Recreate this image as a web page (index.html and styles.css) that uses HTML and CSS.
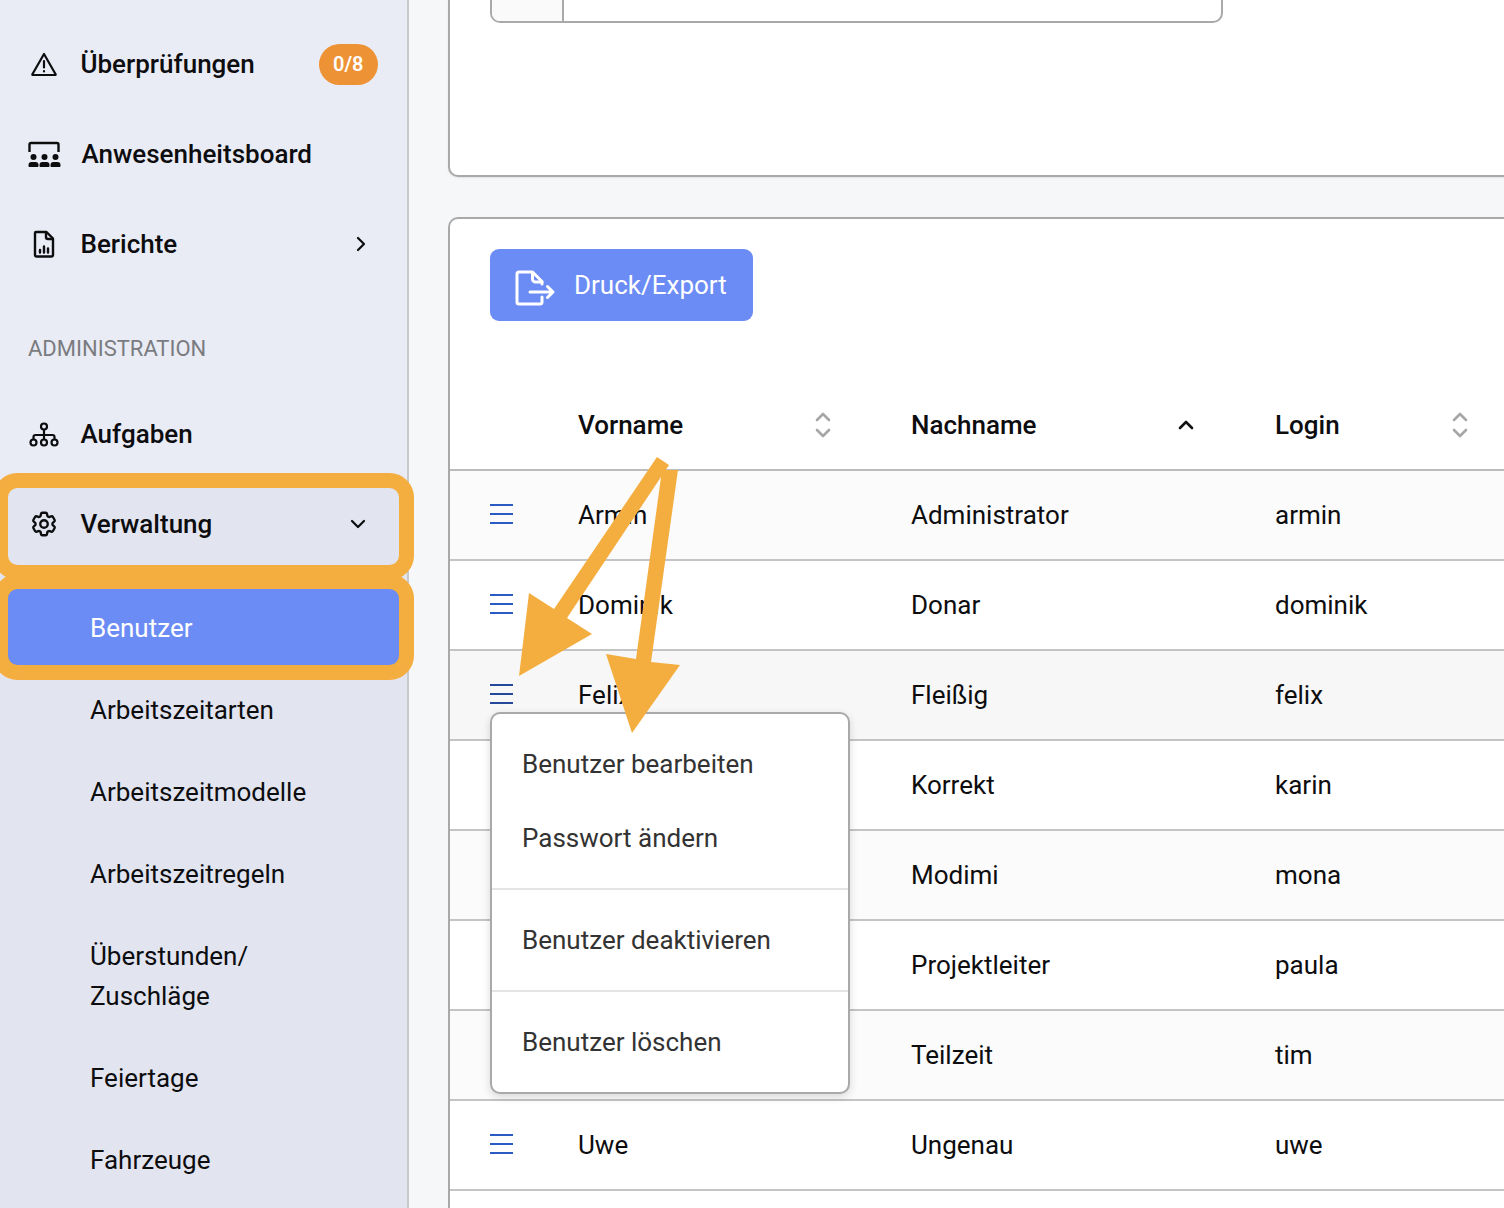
FILE: index.html
```html
<!DOCTYPE html>
<html lang="de">
<head>
  <meta charset="UTF-8">
  <meta name="viewport" content="width=device-width, initial-scale=1.0">
  <title>Benutzer</title>
  <link rel="stylesheet" href="styles.css">
</head>
<body>
  <!-- Sidebar -->
  <div class="sidebar">
    <ul class="nav">
      <li class="nav-item">
        <span class="nav-icon">
          <svg width="28" height="26" viewBox="0 0 28 26" fill="none" stroke="currentColor" stroke-width="2.2" stroke-linecap="round" stroke-linejoin="round"><path d="M14 3 2.4 23.2a.5.5 0 0 0 .4.8h22.4a.5.5 0 0 0 .4-.8Z"/><path d="M14 10v6.5M14 20.2v.2"/></svg>
        </span>
        <span class="nav-label">Überprüfungen</span>
        <span class="badge">0/8</span>
      </li>
      <li class="nav-item">
        <span class="nav-icon">
          <svg width="34" height="28" viewBox="0 0 34 28" fill="currentColor"><path d="M3 12V4.500a1.500 1.500 0 0 1 1.500-1.500h26a1.500 1.500 0 0 1 1.500 1.500V12" transform="translate(-0.500 0)" fill="none" stroke="currentColor" stroke-width="2.400"/><circle cx="6.500" cy="17" r="3"/><circle cx="17.500" cy="17" r="3"/><circle cx="28.500" cy="17" r="3"/><path d="M1.500 26v-1a3 3 0 0 1 3-3h4a3 3 0 0 1 3 3v1a1 1 0 0 1-1 1h-8a1 1 0 0 1-1-1ZM12.500 26v-1a3 3 0 0 1 3-3h4a3 3 0 0 1 3 3v1a1 1 0 0 1-1 1h-8a1 1 0 0 1-1-1ZM23.500 26v-1a3 3 0 0 1 3-3h4a3 3 0 0 1 3 3v1a1 1 0 0 1-1 1h-8a1 1 0 0 1-1-1Z"/></svg>
        </span>
        <span class="nav-label">Anwesenheitsboard</span>
      </li>
      <li class="nav-item">
        <span class="nav-icon">
          <svg width="22" height="28" viewBox="0 0 22 28" fill="none" stroke="currentColor" stroke-width="2.400" stroke-linecap="round" stroke-linejoin="round"><path d="M3 2h10.500L20 8.500V25a1.500 1.500 0 0 1-1.500 1.500h-15A1.500 1.500 0 0 1 2 25V3a1 1 0 0 1 1-1Z"/><path d="M13 2.500V7a2 2 0 0 0 2 2h4.500"/><path d="M7 22.500v-2.500M11 22.500v-6M15 22.500v-4"/></svg>
        </span>
        <span class="nav-label">Berichte</span>
        <svg class="nav-arrow" width="12" height="16" viewBox="0 0 12 16" fill="none" stroke="currentColor" stroke-width="2.200" stroke-linecap="round" stroke-linejoin="round"><path d="M3 2l6 6-6 6"/></svg>
      </li>
    </ul>

    <div class="nav-heading">ADMINISTRATION</div>

    <ul class="nav">
      <li class="nav-item">
        <span class="nav-icon">
          <svg width="30" height="25" viewBox="0 0 30 25" fill="none" stroke="currentColor" stroke-width="2.200"><circle cx="15" cy="4.500" r="3"/><circle cx="4.500" cy="20.500" r="3"/><circle cx="15" cy="20.500" r="3"/><circle cx="25.500" cy="20.500" r="3"/><path d="M15 7.500v10M4.500 17.500v-2.500a2 2 0 0 1 2-2h17a2 2 0 0 1 2 2v2.500"/></svg>
        </span>
        <span class="nav-label">Aufgaben</span>
      </li>
    </ul>

    <div class="nav-group">
      <div class="nav-item">
        <span class="nav-icon">
          <svg width="30" height="30" viewBox="0 0 24 24" fill="none" stroke="currentColor" stroke-width="1.900" stroke-linecap="round" stroke-linejoin="round"><path d="M9.594 3.940c.09-.542.56-.94 1.110-.94h2.593c.55 0 1.020.398 1.110.94l.213 1.281c.063.374.313.686.645.870.074.040.147.083.22.127.325.196.72.257 1.075.124l1.217-.456a1.125 1.125 0 0 1 1.370.49l1.296 2.247a1.125 1.125 0 0 1-.26 1.431l-1.003.827c-.293.241-.438.613-.43.992a7.723 7.723 0 0 1 0 .255c-.008.378.137.75.43.991l1.004.827c.424.35.534.955.26 1.430l-1.298 2.247a1.125 1.125 0 0 1-1.369.491l-1.217-.456c-.355-.133-.75-.072-1.076.124a6.470 6.470 0 0 1-.22.128c-.331.183-.581.495-.644.869l-.213 1.281c-.09.543-.56.94-1.110.94h-2.594c-.55 0-1.019-.398-1.110-.94l-.213-1.281c-.062-.374-.312-.686-.644-.87a6.520 6.520 0 0 1-.22-.127c-.325-.196-.72-.257-1.076-.124l-1.217.456a1.125 1.125 0 0 1-1.369-.49l-1.297-2.247a1.125 1.125 0 0 1 .26-1.431l1.004-.827c.292-.24.437-.613.43-.991a6.932 6.932 0 0 1 0-.255c.007-.38-.138-.751-.43-.992l-1.004-.827a1.125 1.125 0 0 1-.26-1.430l1.297-2.247a1.125 1.125 0 0 1 1.370-.491l1.216.456c.356.133.751.072 1.076-.124.072-.044.146-.086.22-.128.332-.183.582-.495.644-.869l.214-1.280Z"/><path d="M15 12a3 3 0 1 1-6 0 3 3 0 0 1 6 0Z"/></svg>
        </span>
        <span class="nav-label">Verwaltung</span>
        <svg class="nav-arrow nav-arrow-open" width="16" height="10" viewBox="0 0 16 10" fill="none" stroke="currentColor" stroke-width="2.200" stroke-linecap="round" stroke-linejoin="round"><path d="M2 2l6 6 6-6"/></svg>
      </div>
      <ul class="subnav">
        <li class="subnav-item active">Benutzer</li>
        <li class="subnav-item">Arbeitszeitarten</li>
        <li class="subnav-item">Arbeitszeitmodelle</li>
        <li class="subnav-item">Arbeitszeitregeln</li>
        <li class="subnav-item">Überstunden/<br>Zuschläge</li>
        <li class="subnav-item">Feiertage</li>
        <li class="subnav-item">Fahrzeuge</li>
      </ul>
    </div>
  </div>

  <!-- Main Content -->
  <div class="content">
    <div class="card card-top">
      <div class="filter-box">
        <div class="filter-cell"></div>
      </div>
    </div>

    <div class="card">
      <button class="btn-export" type="button">
        <svg class="btn-export-icon" width="40" height="36" viewBox="0 0 40 36" fill="none" stroke="currentColor" stroke-width="3" stroke-linecap="round" stroke-linejoin="round"><path d="M27 27V32a2 2 0 0 1-2 2H4a2 2 0 0 1-2-2V4a2 2 0 0 1 2-2h13.500L27 11.500V14"/><path d="M17.500 2.500V9a3 3 0 0 0 3 3H27"/><path d="M15 22h23M32.500 16.500 38 22l-5.500 5.500"/></svg>
        Druck/Export
      </button>

      <table class="user-table">
        <colgroup>
          <col class="col-menu">
          <col class="col-first">
          <col class="col-last">
          <col>
        </colgroup>
        <thead>
          <tr>
            <th></th>
            <th>
              <span class="th-inner">Vorname
                <svg class="sort-icon" width="18" height="28" viewBox="0 0 18 28" fill="none" stroke="#a6a6a6" stroke-width="2.600" stroke-linecap="round" stroke-linejoin="round"><path d="M3 9l6-6 6 6M3 19l6 6 6-6"/></svg>
              </span>
            </th>
            <th>
              <span class="th-inner th-inner-sorted">Nachname
                <svg class="sort-icon" width="18" height="12" viewBox="0 0 18 12" fill="none" stroke="#111" stroke-width="2.600" stroke-linecap="round" stroke-linejoin="round"><path d="M3 9l6-6 6 6"/></svg>
              </span>
            </th>
            <th>
              <span class="th-inner th-inner-login">Login
                <svg class="sort-icon" width="18" height="28" viewBox="0 0 18 28" fill="none" stroke="#a6a6a6" stroke-width="2.600" stroke-linecap="round" stroke-linejoin="round"><path d="M3 9l6-6 6 6M3 19l6 6 6-6"/></svg>
              </span>
            </th>
          </tr>
        </thead>
        <tbody>
          <tr class="striped">
            <td><span class="menu-icon"></span></td>
            <td>Armin</td><td>Administrator</td><td>armin</td>
          </tr>
          <tr>
            <td><span class="menu-icon"></span></td>
            <td>Dominik</td><td>Donar</td><td>dominik</td>
          </tr>
          <tr class="hovered">
            <td class="menu-cell">
              <span class="menu-icon menu-icon-open"></span>
              <!-- Row menu -->
              <div class="row-menu">
                <div class="row-menu-item">Benutzer bearbeiten</div>
                <div class="row-menu-item">Passwort ändern</div>
                <div class="row-menu-divider"></div>
                <div class="row-menu-item">Benutzer deaktivieren</div>
                <div class="row-menu-divider"></div>
                <div class="row-menu-item">Benutzer löschen</div>
              </div>
            </td>
            <td>Felix</td><td>Fleißig</td><td>felix</td>
          </tr>
          <tr>
            <td></td>
            <td></td><td>Korrekt</td><td>karin</td>
          </tr>
          <tr class="striped">
            <td></td>
            <td></td><td>Modimi</td><td>mona</td>
          </tr>
          <tr>
            <td></td>
            <td></td><td>Projektleiter</td><td>paula</td>
          </tr>
          <tr class="striped">
            <td></td>
            <td></td><td>Teilzeit</td><td>tim</td>
          </tr>
          <tr>
            <td><span class="menu-icon"></span></td>
            <td>Uwe</td><td>Ungenau</td><td>uwe</td>
          </tr>
        </tbody>
      </table>
    </div>
  </div>

  <!-- Orange annotations drawn on top of the screenshot -->
  <svg class="annotations" width="1504" height="1208" viewBox="0 0 1504 1208">
    <g fill="none" stroke="#f4ae3f" stroke-width="15">
      <rect x="0.500" y="480.500" width="406" height="92" rx="17"/>
      <rect x="0.500" y="581.500" width="406" height="91" rx="17"/>
    </g>
    <g fill="#f4ae3f">
      <polygon points="662,470 678,470 651,662 680,665 632,733 606,654 636,659"/>
      <polygon points="657,457 669,465 567,618 592,634 519,676 529,593 554,609"/>
    </g>
  </svg>
</body>
</html>
```

FILE: styles.css
```css
/* Global Styles */
body {
  font-family: Roboto, "Liberation Sans", sans-serif;
  margin: 0;
  padding: 0;
  height: 1208px;
  display: flex;
  overflow: hidden;
  position: relative;
  background-color: #f6f7f9;
  color: #0d0d0f;
}

ul {
  list-style-type: none;
  margin: 0;
  padding: 0;
}

/* Sidebar */
.sidebar {
  flex: 0 0 409px;
  height: 1208px;
  padding-top: 19px;
  box-sizing: border-box;
  background-color: #e9ecf5;
  border-right: 2px solid #c8c9cb;
  overflow: hidden;
}

.nav-item {
  height: 90px;
  display: flex;
  align-items: center;
  padding: 0 40px 0 27px;
  font-size: 26px;
  font-weight: 500;
}

.nav-icon {
  flex: 0 0 33px;
  margin-right: 20.500px;
  display: flex;
  justify-content: center;
  align-items: center;
}

.nav-label {
  flex: 1;
}

.nav-arrow-open {
  margin-right: 1px;
}

.badge {
  background-color: #ee9236;
  color: white;
  font-size: 20px;
  font-weight: 600;
  line-height: 41px;
  padding: 0 14.500px;
  border-radius: 21px;
  margin-right: -11px;
}

.nav-heading {
  height: 100px;
  line-height: 120px;
  box-sizing: border-box;
  padding-left: 28px;
  font-size: 22px;
  color: #7a7b80;
}

.nav-group {
  background-color: #e2e5f0;
  height: 800px;
}

.subnav {
  margin-top: 18px;
}

.subnav-item {
  min-height: 82px;
  box-sizing: border-box;
  padding: 21px 0 21px 90px;
  line-height: 40px;
  font-size: 26px;
}

.subnav-item.active {
  color: white;
  background-color: #6b8bf5;
  margin: 0 7px;
  padding-left: 83px;
}

/* Main Content */
.content {
  flex: 1;
  min-width: 0;
  padding-left: 39px;
  overflow: hidden;
}

.card {
  width: 1200px;
  box-sizing: border-box;
  background-color: white;
  border: 2px solid #a9a9a9;
  border-right: none;
  border-radius: 10px 0 0 10px;
  padding: 30px 0 40px;
}

.card-top {
  height: 177px;
  padding: 0;
  margin-bottom: 40px;
  border-top: none;
  border-radius: 0 0 0 10px;
  box-shadow: 0 1px 2px rgba(0, 0, 0, 0.08);
}

.filter-box {
  width: 733px;
  height: 23px;
  box-sizing: border-box;
  margin-left: 40px;
  background-color: white;
  border: 2px solid #a9a9a9;
  border-top: none;
  border-radius: 0 0 10px 10px;
  overflow: hidden;
}

.filter-cell {
  width: 70px;
  height: 100%;
  background-color: #fafafa;
  border-right: 2px solid #a9a9a9;
}

.btn-export {
  display: flex;
  align-items: center;
  gap: 19px;
  width: 263px;
  height: 72px;
  margin-left: 40px;
  padding: 0 0 0 25px;
  background-color: #6b8bf5;
  color: white;
  border: none;
  border-radius: 9px;
  font-family: inherit;
  font-size: 26px;
  cursor: pointer;
}

.btn-export-icon {
  margin-top: 6px;
}

/* Table */
.user-table {
  width: 100%;
  table-layout: fixed;
  border-collapse: separate;
  border-spacing: 0;
  margin-top: 60px;
  font-size: 26px;
}

.col-menu {
  width: 128px;
}

.col-first {
  width: 333px;
}

.col-last {
  width: 364px;
}

.user-table th {
  height: 90px;
  box-sizing: border-box;
  padding: 0;
  text-align: left;
  font-weight: 500;
  border-bottom: 2px solid #bcbcbc;
}

.th-inner {
  display: flex;
  align-items: center;
  justify-content: space-between;
  width: 254px;
}

.th-inner-sorted {
  width: 284px;
}

.th-inner-login {
  width: 194px;
}

.user-table td {
  height: 90px;
  box-sizing: border-box;
  padding: 0;
  border-bottom: 2px solid #c4c4c4;
}

.striped td {
  background-color: #fbfbfb;
}

.hovered td {
  background-color: #f7f7f7;
}

.menu-icon {
  display: block;
  box-sizing: border-box;
  width: 23px;
  height: 20px;
  margin: -2px 0 0 40px;
  border-top: 2px solid #2a5bc4;
  border-bottom: 2px solid #2a5bc4;
  position: relative;
}

.menu-icon::after {
  content: "";
  position: absolute;
  left: 0;
  right: 0;
  top: 7px;
  height: 2px;
  background-color: #2a5bc4;
}

.menu-icon-open {
  border-color: #24499b;
}

.menu-icon-open::after {
  background-color: #24499b;
}

.menu-cell {
  position: relative;
}

/* Row menu */
.row-menu {
  position: absolute;
  left: 40px;
  top: 61px;
  z-index: 10;
  width: 360px;
  box-sizing: border-box;
  padding: 13px 0;
  background-color: white;
  border: 2px solid #a9a9a9;
  border-radius: 10px;
  box-shadow: 0 3px 8px rgba(0, 0, 0, 0.14);
  color: #333;
}

.row-menu-item {
  height: 74px;
  line-height: 74px;
  padding-left: 30px;
  font-size: 26px;
}

.row-menu-divider {
  height: 2px;
  margin: 13px 0;
  background-color: #e4e4e4;
}

/* Annotations */
.annotations {
  position: absolute;
  left: 0;
  top: 0;
  z-index: 20;
}
```
